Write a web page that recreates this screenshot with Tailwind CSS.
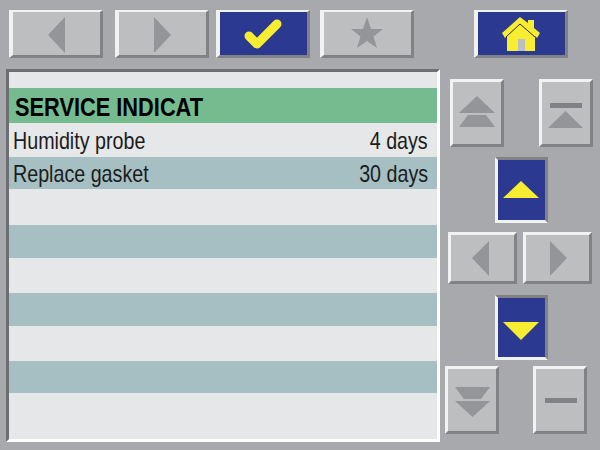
<!doctype html>
<html><head><meta charset="utf-8"><script src="https://cdn.jsdelivr.net/npm/@tailwindcss/browser@4"></script></head>
<body class="m-0">
<div class="w-[600px] h-[450px] overflow-hidden bg-[#a7a9ac] font-['Liberation_Sans',sans-serif] text-[#1c1c1c]">
  <div class="flex pt-[10px] pl-[9px]">
    <div class="w-[94px] h-[48px] bg-[#bcbec0] border-t-[2px] border-l-[4px] border-r-[3px] border-b-[3px] border-t-[#f1f2f2] border-l-[#f1f2f2] border-r-[#808285] border-b-[#808285] flex items-center justify-center">
      <svg width="87" height="43" viewBox="0 0 87 43" class="shrink-0"><g transform="translate(-1,1)"><polygon points="36,22 53,4 53,40" fill="#939598"/></g></svg>
    </div>
    <div class="ml-[12px] w-[94px] h-[48px] bg-[#bcbec0] border-t-[2px] border-l-[4px] border-r-[3px] border-b-[3px] border-t-[#f1f2f2] border-l-[#f1f2f2] border-r-[#808285] border-b-[#808285] flex items-center justify-center">
      <svg width="87" height="43" viewBox="0 0 87 43" class="shrink-0"><g transform="translate(-1,1)"><polygon points="36,4 53,22 36,40" fill="#939598"/></g></svg>
    </div>
    <div class="ml-[7px] w-[94px] h-[48px] bg-[#2b3990] border-t-[2px] border-l-[4px] border-r-[3px] border-b-[3px] border-t-[#f1f2f2] border-l-[#f1f2f2] border-r-[#808285] border-b-[#808285] flex items-center justify-center">
      <svg width="87" height="43" viewBox="0 0 87 43" class="shrink-0"><g transform="translate(-1,1)"><polyline points="30,23 38,31 58,11" fill="none" stroke="#f9ed32" stroke-width="9" stroke-linecap="round" stroke-linejoin="round"/></g></svg>
    </div>
    <div class="ml-[10px] w-[94px] h-[48px] bg-[#bcbec0] border-t-[2px] border-l-[4px] border-r-[3px] border-b-[3px] border-t-[#f1f2f2] border-l-[#f1f2f2] border-r-[#808285] border-b-[#808285] flex items-center justify-center">
      <svg width="87" height="43" viewBox="0 0 87 43" class="shrink-0"><g transform="translate(-1,1)"><polygon points="44,4 48,16 60,16 50.500,23.500 54,35 44,28 34,35 37.500,23.500 28,16 40,16" fill="#939598"/></g></svg>
    </div>
    <div class="ml-[60px] w-[94px] h-[48px] bg-[#2b3990] border-t-[2px] border-l-[4px] border-r-[3px] border-b-[3px] border-t-[#f1f2f2] border-l-[#f1f2f2] border-r-[#808285] border-b-[#808285] flex items-center justify-center">
      <svg width="87" height="43" viewBox="0 0 87 43" class="shrink-0"><g transform="translate(-1,1)"><polygon points="43,4 51,10 51,7 57,7 57,15 63,20 60,25 58,23 58,38 30,38 30,23 28,25 25,20" fill="#f9ed32"/><polyline points="29,24 43,11 58,24" fill="none" stroke="#2b2b20" stroke-width="1"/><rect x="41" y="26" width="7" height="12" fill="#bcbec0"/></g></svg>
    </div>
  </div>
  <div class="flex mt-[11px] ml-[6px]">
    <div class="w-[434px] h-[373px] border-[3px] border-t-[#6d6e71] border-l-[#6d6e71] border-r-white border-b-white bg-[#e6e7e8] flex flex-col shrink-0">
      <div class="h-[16px]"></div>
      <div class="h-[35px] bg-[#75bb8f] flex items-center pl-[6px] text-black font-bold text-[26px]"><span class="origin-left scale-x-[0.838] whitespace-nowrap translate-y-[2px]">SERVICE INDICAT</span></div>
      <div class="h-[34px] flex items-center justify-between pl-[4px] pr-[9px] text-[24px]"><span class="origin-left scale-x-[0.82] whitespace-nowrap translate-y-[1px]">Humidity probe</span><span class="origin-right scale-x-[0.82] whitespace-nowrap translate-y-[1px]">4 days</span></div>
      <div class="h-[32px] bg-[#a5bfc2] flex items-center justify-between pl-[4px] pr-[9px] text-[24px]"><span class="origin-left scale-x-[0.82] whitespace-nowrap translate-y-[1px]">Replace gasket</span><span class="origin-right scale-x-[0.82] whitespace-nowrap translate-y-[1px]">30 days</span></div>
      <div class="h-[36px]"></div>
      <div class="h-[33px] bg-[#a5bfc2]"></div>
      <div class="h-[35px]"></div>
      <div class="h-[33px] bg-[#a5bfc2]"></div>
      <div class="h-[35px]"></div>
      <div class="h-[32px] bg-[#a5bfc2]"></div>
    </div>
    <div class="flex flex-col w-[160px]">
      <div class="flex pt-[10px] pl-[10px]">
        <div class="w-[54px] h-[68px] bg-[#bcbec0] border-[3px] border-t-[#f1f2f2] border-l-[#f1f2f2] border-r-[#808285] border-b-[#808285] flex items-center justify-center">
          <svg width="48" height="62" viewBox="0 0 48 62" class="shrink-0"><polygon points="24,14 42,31 6,31" fill="#939598"/><polygon points="15,33 33,33 42,45 6,45" fill="#939598"/></svg>
        </div>
        <div class="ml-[35px] w-[54px] h-[68px] bg-[#bcbec0] border-[3px] border-t-[#f1f2f2] border-l-[#f1f2f2] border-r-[#808285] border-b-[#808285] flex items-center justify-center">
          <svg width="48" height="62" viewBox="0 0 48 62" class="shrink-0"><rect x="8" y="21" width="32" height="5" fill="#808285"/><polygon points="23.500,29 41,46 6,46" fill="#939598"/></svg>
        </div>
      </div>
      <div class="pt-[10px] pl-[55px]">
        <div class="w-[53px] h-[66px] bg-[#2b3990] border-[3px] border-t-[#808285] border-l-[#f1f2f2] border-r-[#808285] border-b-[#f1f2f2] flex items-center justify-center">
          <svg width="47" height="60" viewBox="0 0 47 60" class="shrink-0"><polygon points="23,21 41,38 5,38" fill="#f9ed32"/></svg>
        </div>
      </div>
      <div class="flex pt-[9px] pl-[8px]">
        <div class="w-[69px] h-[52px] bg-[#bcbec0] border-[3px] border-t-[#f1f2f2] border-l-[#f1f2f2] border-r-[#808285] border-b-[#808285] flex items-center justify-center">
          <svg width="63" height="46" viewBox="0 0 63 46" class="shrink-0"><polygon points="21,23 38,6 38,41" fill="#939598"/></svg>
        </div>
        <div class="ml-[6px] w-[69px] h-[52px] bg-[#bcbec0] border-[3px] border-t-[#f1f2f2] border-l-[#f1f2f2] border-r-[#808285] border-b-[#808285] flex items-center justify-center">
          <svg width="63" height="46" viewBox="0 0 63 46" class="shrink-0"><polygon points="24,6 41,23 24,41" fill="#939598"/></svg>
        </div>
      </div>
      <div class="pt-[11px] pl-[55px]">
        <div class="w-[53px] h-[65px] bg-[#2b3990] border-[3px] border-t-[#808285] border-l-[#f1f2f2] border-r-[#808285] border-b-[#f1f2f2] flex items-center justify-center">
          <svg width="47" height="59" viewBox="0 0 47 59" class="shrink-0"><polygon points="5,24 41,24 23,42" fill="#f9ed32"/></svg>
        </div>
      </div>
      <div class="flex pt-[6px] pl-[5px]">
        <div class="w-[54px] h-[68px] bg-[#bcbec0] border-[3px] border-t-[#f1f2f2] border-l-[#f1f2f2] border-r-[#808285] border-b-[#808285] flex items-center justify-center">
          <svg width="48" height="62" viewBox="0 0 48 62" class="shrink-0"><polygon points="7,18 42,18 33,30 16,30" fill="#939598"/><polygon points="7,32 42,32 24.500,48" fill="#939598"/></svg>
        </div>
        <div class="ml-[34px] w-[54px] h-[68px] bg-[#bcbec0] border-[3px] border-t-[#f1f2f2] border-l-[#f1f2f2] border-r-[#808285] border-b-[#808285] flex items-center justify-center">
          <svg width="48" height="62" viewBox="0 0 48 62" class="shrink-0"><rect x="9" y="29" width="32" height="5" fill="#808285"/></svg>
        </div>
      </div>
    </div>
  </div>
</div>
</body></html>
